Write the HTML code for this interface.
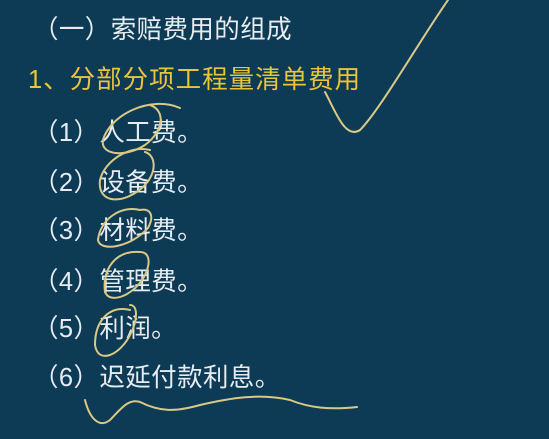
<!DOCTYPE html>
<html><head><meta charset="utf-8"><style>
html,body{margin:0;padding:0}
body{width:549px;height:439px;background:#0d3a55;position:relative;overflow:hidden;font-family:"Liberation Sans","Noto Sans CJK SC",sans-serif;font-size:25.5px;letter-spacing:0.4px;color:#e6ecef}
.l{position:absolute;left:33px;white-space:nowrap;line-height:30px}
.y{color:#e9c53a;left:28px;letter-spacing:1px}
svg{position:absolute;left:0;top:0}
</style></head><body>
<div class="l" style="top:15px">（一）索赔费用的组成</div>
<div class="l y" style="top:65px">1、分部分项工程量清单费用</div>
<div class="l" style="top:118px">（1）人工费。</div>
<div class="l" style="top:168px">（2）设备费。</div>
<div class="l" style="top:216px">（3）材料费。</div>
<div class="l" style="top:267px">（4）管理费。</div>
<div class="l" style="top:314px">（5）利润。</div>
<div class="l" style="top:363px">（6）迟延付款利息。</div>
<svg width="549" height="439" fill="none" stroke="#d9c985" stroke-width="2" stroke-linecap="round">
<path d="M448 0 C420 40 380 110 360 130 C345 140 335 110 325 92"/>
<path d="M180 108 C150 95 110 115 103 140 C100 155 125 158 145 145 C165 130 165 110 150 105"/>
<path d="M150 150 C130 145 105 160 100 180 C97 205 125 205 145 185 C158 170 155 155 145 152"/>
<path d="M140 210 C120 205 100 220 98 240 C100 252 130 248 148 228 C155 215 150 208 140 210"/>
<path d="M140 252 C115 250 102 270 105 292 C110 305 135 295 145 275 C152 260 148 252 140 252"/>
<path d="M130 310 C110 305 95 320 95 345 C98 365 120 355 130 335 C138 320 138 305 130 305"/>
<path d="M85 400 C90 420 100 428 110 420 C120 410 128 398 140 402 C160 412 175 412 200 405 C230 398 260 393 290 400 C310 408 330 410 357 407"/>
</svg>
</body></html>
